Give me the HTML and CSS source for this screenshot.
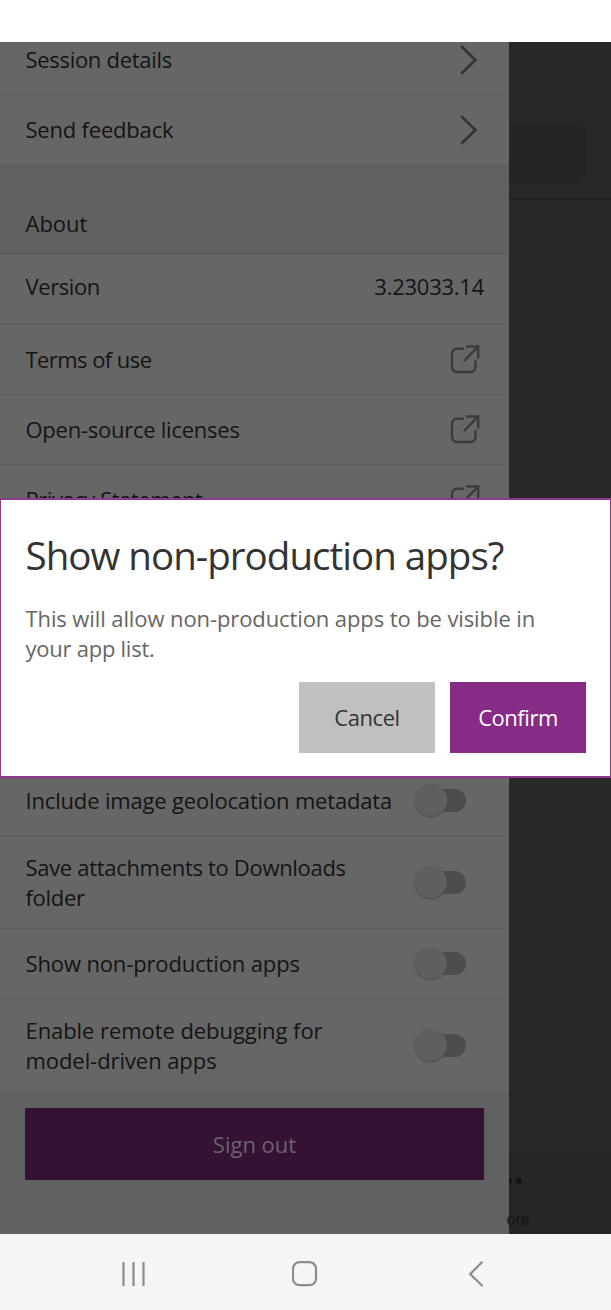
FILE: index.html
```html
<!DOCTYPE html>
<html lang="en">
<head>
<meta charset="utf-8">
<title>Settings</title>
<link rel="stylesheet" href="styles.css">
</head>
<body>
<svg width="0" height="0" class="defs" aria-hidden="true">
  <symbol id="chevron" viewBox="0 0 18 30"><path d="M2 2 L15.500 15 L2 28"/></symbol>
  <symbol id="external" viewBox="0 0 30 30"><path d="M13 4.700H7a5 5 0 0 0-5 5V23a5 5 0 0 0 5 5H20.500a5 5 0 0 0 5-5V17.500M17 2.500H28.200V13.500M28 2.700L14.500 16.500"/></symbol>
</svg>
<div class="phone">
  <div class="statusbar"></div>
  <main class="app">
    <section class="panel">
      <div class="row row-clipped"><span class="t-session">Session details</span><svg class="chevron"><use href="#chevron"/></svg></div>
      <div class="row section-end"><span class="t-feedback">Send feedback</span><svg class="chevron"><use href="#chevron"/></svg></div>
      <h2 class="heading">About</h2>
      <div class="row row-version"><span class="t-version">Version</span><span class="version">3.23033.14</span></div>
      <div class="row thin"><span class="t-terms">Terms of use</span><svg class="external"><use href="#external"/></svg></div>
      <div class="row thin"><span class="t-open">Open-source licenses</span><svg class="external"><use href="#external"/></svg></div>
      <div class="row thin"><span class="t-privacy">Privacy Statement</span><svg class="external"><use href="#external"/></svg></div>
      <div class="gap"></div>
      <div class="row thin"><span class="t-geo">Include image geolocation metadata</span><i class="toggle"></i></div>
      <div class="row thin tall"><span class="t-save">Save attachments to Downloads<br>folder</span><i class="toggle"></i></div>
      <div class="row thin"><span class="t-show">Show non-production apps</span><i class="toggle"></i></div>
      <div class="row thin tall last"><span class="t-remote">Enable remote debugging for<br>model-driven apps</span><i class="toggle"></i></div>
      <div class="signout-area"><button class="signout">Sign out</button></div>
    </section>
    <aside class="behind">
      <div class="behind-head"><div class="search"></div></div>
      <div class="behind-tab"><div class="dots"><i></i><i></i></div><span class="more">ore</span></div>
    </aside>
    <div class="dialog" role="dialog">
      <h1 class="title">Show non-production apps?</h1>
      <p class="message">This will allow non-production apps to be visible in<br><span class="t-list">your app list.</span></p>
      <div class="actions"><button class="btn cancel">Cancel</button><button class="btn confirm">Confirm</button></div>
    </div>
  </main>
  <nav class="navbar">
    <svg width="26" height="26" viewBox="0 0 26 26"><path d="M2.500 1V25M12.500 1V25M22.500 1V25"/></svg>
    <svg width="26" height="26" viewBox="0 0 26 26"><rect x="1" y="1.200" width="23" height="23" rx="6.500"/></svg>
    <svg width="26" height="26" viewBox="0 0 26 26"><path d="M19.500 .8L7.200 13L19.500 25"/></svg>
  </nav>
</div>
</body>
</html>
```
FILE: styles.css
```css
* { box-sizing: border-box; }
body { margin: 0; background: #fff; font-family: "Open Sans", "Noto Sans", sans-serif; font-size: 22px; line-height: 30px; color: #141414; }
.defs { position: absolute; }
.phone { width: 611px; height: 1310px; display: flex; flex-direction: column; }
.statusbar { height: 42px; background: #fff; }
.app { height: 1192px; position: relative; display: flex; overflow: hidden; }
.panel { width: 509px; background: #666; }
.row { height: 70px; padding: 0 25px 0 25.500px; display: flex; align-items: center; justify-content: space-between; border-bottom: 2px solid #616161; white-space: nowrap; }
.row > span { padding-bottom: 2px; }
.row-clipped { height: 54px; padding-bottom: 16px; }
.section-end { height: 71px; padding-bottom: 1px; border-color: #5d5d5d; }
.thin { border-bottom-width: 1px; border-color: #5e5e5e; }
.tall { height: 93px; }
.tall > span { padding-bottom: 0; }
.last { height: 94px; padding-bottom: 1px; }
.chevron { width: 18px; height: 30px; margin-right: 6px; fill: none; stroke: #343434; stroke-width: 2.7; stroke-linecap: round; }
.external { width: 30px; height: 30px; margin: 0 4px 1px 0; fill: none; stroke: #3b3b3b; stroke-width: 2.4; stroke-linecap: round; }
.heading { margin: 0; height: 88px; padding: 41px 25.500px 0; background: #616161; border-bottom: 2px solid #5e5e5e; font-size: 22px; font-weight: 400; }
.row-version { height: 70px; padding-bottom: 5px; border-bottom: 1px solid #5e5e5e; }
.gap { height: 231px; }
.toggle { width: 51px; height: 34px; margin: 0 18px 1px 0; position: relative; z-index: 0; display: flex; align-items: center; }
.toggle::before { content: ""; width: 32px; height: 32px; border-radius: 50%; background: #5f5f5f; box-shadow: 0 1px 2px #494949; }
.toggle::after { content: ""; position: absolute; z-index: -1; left: 9px; top: 6px; width: 42px; height: 23px; border-radius: 12px; background: #4d4d4d; }
.signout-area { height: 141px; padding: 15px 25px; background: #616161; }
button { border: 0; padding: 0; font: inherit; display: block; }
.signout { width: 459px; height: 72px; background: #351133; color: #6d616d; }
.behind { width: 102px; background: #282828; display: flex; flex-direction: column; justify-content: space-between; }
.behind-head { height: 158px; padding-top: 83px; border-bottom: 2px solid #212121; }
.search { width: 77px; height: 58px; border-radius: 0 10px 10px 0; background: #252525; }
.behind-tab { height: 82px; background: #262626; display: flex; flex-direction: column; }
.dots { height: 6px; flex: none; display: flex; gap: 4px; margin-top: 26px; }
.dots i { width: 6px; height: 6px; border-radius: 50%; background: #141414; }
.dots i:first-child { width: 3px; border-radius: 0 3px 3px 0; }
.more { margin: 24px 0 0 -2.500px; font: 16px/24px Roboto, sans-serif; color: #151515; }
.dialog { position: absolute; left: 0; top: 456px; width: 611px; height: 280px; padding: 33px 24px 0 24.500px; background: #fff; border: 2px solid #8b3a8b; border-left-width: 1px; border-right-width: 1px; white-space: nowrap; }
.title { margin: 0; font-size: 38.5px; line-height: 44px; font-weight: 400; letter-spacing: -.97px; color: #333; }
.message { margin: 26px 0 0; color: #666; letter-spacing: -.1px; }
.actions { display: flex; justify-content: flex-end; gap: 15px; margin-top: 19px; }
.btn { width: 136px; height: 71px; padding-bottom: 2px; letter-spacing: -.45px; }
.cancel { background: #c0c0c0; color: #333; }
.confirm { background: #862c86; color: #fff; }
.navbar { height: 76px; background: #f5f5f5; display: flex; gap: 145px; padding: 27px 0 0 121px; }
.navbar svg { fill: none; stroke: #8c8c8c; stroke-width: 2.2; }
.t-session { letter-spacing: -.3px; }
.t-feedback { letter-spacing: -.2px; }
.t-version { letter-spacing: -.4px; }
.version { letter-spacing: -.25px; }
.t-terms { letter-spacing: -.56px; }
.t-open { letter-spacing: -.25px; }
.t-privacy { letter-spacing: -.45px; }
.t-geo { letter-spacing: -.17px; }
.t-save { letter-spacing: -.31px; }
.t-show { letter-spacing: -.13px; }
.t-remote { letter-spacing: -.07px; }
.t-list { letter-spacing: -.25px; }
```
